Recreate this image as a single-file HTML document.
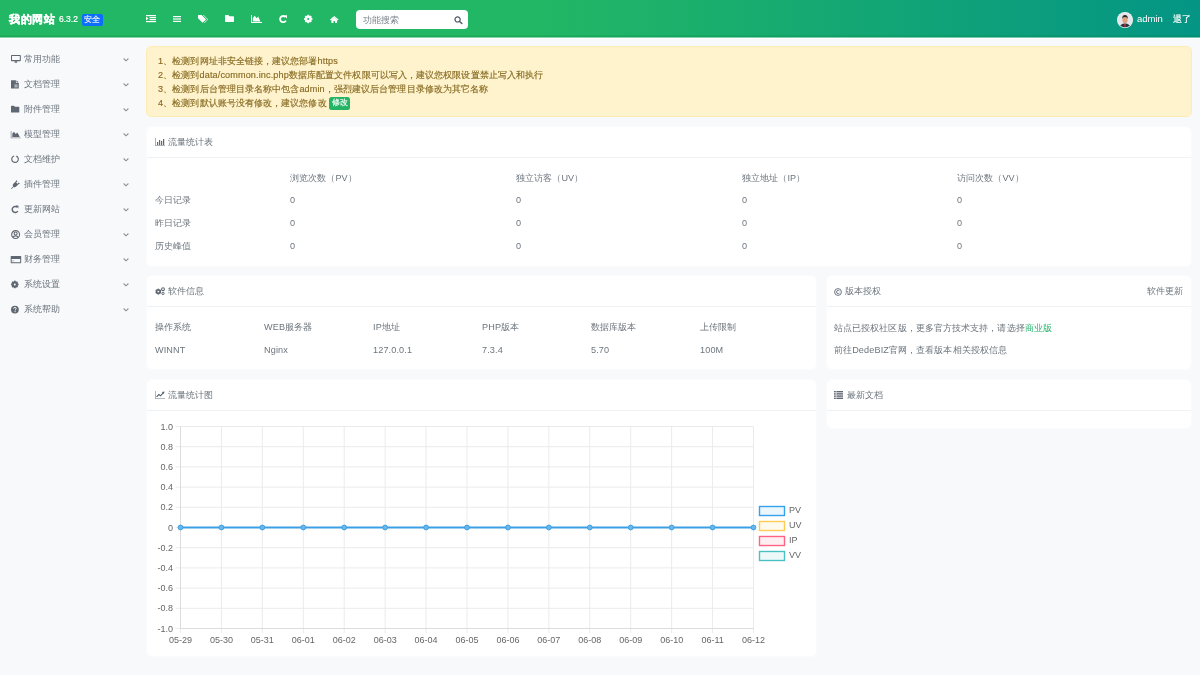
<!DOCTYPE html><html><head><meta charset="utf-8"><style>
*{box-sizing:border-box;margin:0;padding:0}
html,body{width:1200px;height:675px;overflow:hidden}
body{background:#f8f9fb;font-family:"Liberation Sans",sans-serif;color:#6c757d;position:relative}
.a{position:absolute;white-space:nowrap;line-height:1}
#hdr{position:absolute;left:0;top:0;width:1200px;height:37px;background:linear-gradient(90deg,#22b765 0%,#22b765 45%,#049585 100%)}
#hdrb{position:absolute;left:0;top:35px;width:1200px;height:2px;background:linear-gradient(rgba(0,120,40,0.1),rgba(0,120,40,0.25))}
#hdrs{position:absolute;left:0;top:37px;width:1200px;height:1px;background:linear-gradient(90deg,#22b765 0%,#22b765 45%,#049585 100%);opacity:.55}
#hdrw{position:absolute;left:0;top:38px;width:1200px;height:1px;background:#fff}
.card{position:absolute;background:#fff;border:1px solid #fafbfc;border-radius:6px}
.hl{position:absolute;height:1px;background:#f0f2f4}
.sb{font-size:9.1px;color:#6c757d;letter-spacing:.08px}
svg{position:absolute;overflow:visible}
.t9{font-size:9.1px;color:#6c757d;letter-spacing:.08px}
.en{letter-spacing:.13px}
</style></head><body>
<div id="root" style="position:absolute;left:0;top:0;width:1200px;height:675px;will-change:transform">
<div id="hdr"></div><div id="hdrs"></div><div id="hdrb"></div><div id="hdrw"></div>
<div class="a" style="left:9px;top:14.2px;font-size:11.4px;letter-spacing:.5px;font-weight:bold;color:#fff;-webkit-text-stroke:0.3px #fff">我的网站</div>
<div class="a" style="left:59px;top:15px;font-size:8.5px;color:#fff;-webkit-text-stroke:0.2px #fff">6.3.2</div>
<div class="a" style="left:82px;top:14px;width:21px;height:12px;background:#0d6efd;border-radius:2px"></div>
<div class="a" style="left:84px;top:16px;font-size:8px;color:#fff;-webkit-text-stroke:0.15px #fff">安全</div>
<svg style="left:146px;top:15px" width="10" height="7" viewBox="0 0 10 7" fill="#fff"><rect x="0" y="0" width="10" height="1.2"/><rect x="3.5" y="2" width="6.5" height="1.2"/><rect x="3.5" y="4" width="6.5" height="1.2"/><rect x="0" y="6" width="10" height="1.2"/><path d="M0 1.8 L2.5 3.6 L0 5.4Z"/></svg>
<svg style="left:173px;top:16px" width="8" height="6" viewBox="0 0 8 6" fill="#fff"><rect x="0" y="0" width="8" height="1.2"/><rect x="0" y="2.4" width="8" height="1.2"/><rect x="0" y="4.8" width="8" height="1.2"/></svg>
<svg style="left:198px;top:15px" width="10" height="8" viewBox="0 0 10 8" fill="#fff"><path d="M0 0.6 L0 3.2 L4.6 7.8 L8 4.4 L3.6 0 L0.6 0Z M1.6 1.2a0.7 0.7 0 1 0 0.01 0Z"/><path d="M5 0 L9.4 4.4 L6 7.8 L6.6 8 L10 4.4 L5.8 0Z"/></svg>
<svg style="left:225px;top:15px" width="9" height="7" viewBox="0 0 9 7" fill="#fff"><path d="M0 0.8 Q0 0 0.8 0 L3.4 0 L4.4 1.2 L8.2 1.2 Q9 1.2 9 2 L9 6.2 Q9 7 8.2 7 L0.8 7 Q0 7 0 6.2Z"/></svg>
<svg style="left:251px;top:15px" width="11" height="8" viewBox="0 0 11 8" fill="#fff"><path d="M0 0 L0.9 0 L0.9 7 L11 7 L11 8 L0 8Z"/><path d="M1.8 6.4 L1.8 3 L3.8 0.8 L5.6 3.2 L7.2 1.4 L9.4 6.4Z"/></svg>
<svg style="left:279px;top:15px" width="8" height="8" viewBox="0 0 8 8" fill="#fff"><path d="M6.3 1.8 A3.1 3.1 0 1 0 6.9 5.6" fill="none" stroke="#fff" stroke-width="1.8"/><path d="M4.8 0.6 L8 0.2 L7.9 3.6Z"/></svg>
<svg style="left:304px;top:15px" width="8.5" height="8" viewBox="0 0 8.5 8" fill="#fff"><g transform="translate(4.25 4)"><circle r="2.5" fill="none" stroke="#fff" stroke-width="1.9"/><rect x="-0.85" y="-4.2" width="1.7" height="8.4"/><rect x="-0.85" y="-4.2" width="1.7" height="8.4" transform="rotate(45)"/><rect x="-0.85" y="-4.2" width="1.7" height="8.4" transform="rotate(90)"/><rect x="-0.85" y="-4.2" width="1.7" height="8.4" transform="rotate(135)"/><circle r="1.05" fill="#22b765"/></g></svg>
<svg style="left:330px;top:15.5px" width="8.5" height="7" viewBox="0 0 8.5 7" fill="#fff"><path d="M4.25 0 L8.5 3.6 L7.6 4.4 L4.25 1.6 L0.9 4.4 L0 3.6Z"/><path d="M1.4 3.9 L4.25 1.6 L7.1 3.9 L7.1 7 L5 7 L5 5 L3.5 5 L3.5 7 L1.4 7Z"/></svg>
<div class="a" style="left:356px;top:10px;width:112px;height:19px;background:#fff;border-radius:4px"></div>
<div class="a" style="left:363px;top:16.2px;font-size:8.75px;color:#7b848c">功能搜索</div>
<svg style="left:454px;top:15.8px" width="9" height="8" viewBox="0 0 9 8"><circle cx="3.6" cy="3.4" r="2.6" fill="none" stroke="#4f5a66" stroke-width="1.2"/><path d="M5.6 5.4 L7.9 7.6" stroke="#4f5a66" stroke-width="1.4" stroke-linecap="round"/></svg>
<svg style="left:1116.5px;top:12px" width="16" height="16" viewBox="0 0 16 16"><defs><clipPath id="cc"><circle cx="8" cy="8" r="7.3"/></clipPath></defs><circle cx="8" cy="8" r="8" fill="#f4f5f7"/><circle cx="8" cy="8" r="7.3" fill="#e3e6ea"/><g clip-path="url(#cc)"><path d="M2.5 16 Q3 11.8 8 11.6 Q13 11.8 13.5 16Z" fill="#2b3440"/><path d="M7.3 11.8 L8.7 11.8 L8.4 16 L7.6 16Z" fill="#d2322d"/><ellipse cx="8" cy="8" rx="2.6" ry="3.3" fill="#e0a080"/><path d="M5.2 7 Q5 3.2 8 3.1 Q11 3.2 10.8 7 Q10.4 5 8 4.9 Q5.6 5 5.2 7Z" fill="#2a2a2a"/></g></svg>
<div class="a" style="left:1137px;top:14px;font-size:9.5px;color:#fff">admin</div>
<div class="a" style="left:1173px;top:14.5px;font-size:9px;color:#fff;-webkit-text-stroke:0.2px #fff">退了</div>
<svg style="left:10.9px;top:54.5px" width="10" height="10" viewBox="0 0 10 10" fill="#5f6872"><path d="M0.7 0 L9.1 0 Q9.8 0 9.8 0.7 L9.8 5.6 Q9.8 6.3 9.1 6.3 L0.7 6.3 Q0 6.3 0 5.6 L0 0.7 Q0 0 0.7 0Z M1 0.95 L1 4.9 L8.8 4.9 L8.8 0.95Z" fill-rule="evenodd"/><path d="M3.7 6.3 L6.1 6.3 L6.2 7.7 L3.6 7.7Z"/></svg>
<div class="a sb" style="left:24px;top:54.5px">常用功能</div>
<svg style="left:123px;top:57.7px" width="6" height="4" viewBox="0 0 6 4"><path d="M0.6 0.5 L3 2.8 L5.4 0.5" fill="none" stroke="#8a929a" stroke-width="1.05"/></svg>
<svg style="left:10.9px;top:79.5px" width="10" height="10" viewBox="0 0 10 10" fill="#5f6872"><path d="M0 0.3 L4.9 0.3 L4.9 3.1 L7.8 3.1 L7.8 8.6 L0 8.6Z"/><path d="M5.5 0.3 L7.8 2.5 L5.5 2.5Z"/><rect x="3.4" y="4.3" width="3.2" height="3.2" fill="#a9afb5"/></svg>
<div class="a sb" style="left:24px;top:79.5px">文档管理</div>
<svg style="left:123px;top:82.7px" width="6" height="4" viewBox="0 0 6 4"><path d="M0.6 0.5 L3 2.8 L5.4 0.5" fill="none" stroke="#8a929a" stroke-width="1.05"/></svg>
<svg style="left:10.9px;top:104.5px" width="10" height="10" viewBox="0 0 10 10" fill="#5f6872"><path d="M0 1.3 Q0 0.7 0.6 0.7 L3 0.7 L3.9 1.7 L7.7 1.7 Q8.3 1.7 8.3 2.3 L8.3 7 Q8.3 7.6 7.7 7.6 L0.6 7.6 Q0 7.6 0 7Z"/></svg>
<div class="a sb" style="left:24px;top:104.5px">附件管理</div>
<svg style="left:123px;top:107.7px" width="6" height="4" viewBox="0 0 6 4"><path d="M0.6 0.5 L3 2.8 L5.4 0.5" fill="none" stroke="#8a929a" stroke-width="1.05"/></svg>
<svg style="left:10.9px;top:129.5px" width="10" height="10" viewBox="0 0 10 10" fill="#5f6872"><path d="M-0.3 0.9 L0.5 0.9 L0.5 7.4 L9.7 7.4 L9.7 8.2 L-0.3 8.2Z" fill="#8f979e"/><path d="M1.3 6.9 L1.3 3.6 L3 1.8 L4.7 3.9 L6.3 2.6 L7.4 4.2 L8.8 6.9Z"/></svg>
<div class="a sb" style="left:24px;top:129.5px">模型管理</div>
<svg style="left:123px;top:132.7px" width="6" height="4" viewBox="0 0 6 4"><path d="M0.6 0.5 L3 2.8 L5.4 0.5" fill="none" stroke="#8a929a" stroke-width="1.05"/></svg>
<svg style="left:10.9px;top:154.5px" width="10" height="10" viewBox="0 0 10 10" fill="#5f6872"><path d="M5.3 1.1 A3.3 3.3 0 1 1 3.2 0.95" fill="none" stroke="#5f6872" stroke-width="1.15"/></svg>
<div class="a sb" style="left:24px;top:154.5px">文档维护</div>
<svg style="left:123px;top:157.7px" width="6" height="4" viewBox="0 0 6 4"><path d="M0.6 0.5 L3 2.8 L5.4 0.5" fill="none" stroke="#8a929a" stroke-width="1.05"/></svg>
<svg style="left:10.9px;top:179.5px" width="10" height="10" viewBox="0 0 10 10" fill="#5f6872"><path d="M0 8.5 L2.1 6.4 Q1.2 5 2.4 3.8 L4.5 1.7 L7.3 4.5 L5.2 6.6 Q4 7.8 2.6 6.9 L0.6 8.9Z M5.5 0.2 L6.5 1.2 L5.4 2.3 L4.4 1.3Z M7.7 2.4 L8.8 3.4 L7.7 4.5 L6.7 3.5Z"/></svg>
<div class="a sb" style="left:24px;top:179.5px">插件管理</div>
<svg style="left:123px;top:182.7px" width="6" height="4" viewBox="0 0 6 4"><path d="M0.6 0.5 L3 2.8 L5.4 0.5" fill="none" stroke="#8a929a" stroke-width="1.05"/></svg>
<svg style="left:10.9px;top:204.5px" width="10" height="10" viewBox="0 0 10 10" fill="#5f6872"><path d="M6.2 2.1 A3.05 3.05 0 1 0 6.8 6.2" fill="none" stroke="#5f6872" stroke-width="1.45"/><path d="M4.6 0.5 L7.4 0.5 L7.4 3.5Z"/></svg>
<div class="a sb" style="left:24px;top:204.5px">更新网站</div>
<svg style="left:123px;top:207.7px" width="6" height="4" viewBox="0 0 6 4"><path d="M0.6 0.5 L3 2.8 L5.4 0.5" fill="none" stroke="#8a929a" stroke-width="1.05"/></svg>
<svg style="left:10.9px;top:229.5px" width="10" height="10" viewBox="0 0 10 10" fill="#5f6872"><circle cx="4.6" cy="4.55" r="3.95" fill="none" stroke="#5f6872" stroke-width="1.1"/><circle cx="4.6" cy="3.5" r="1.55" fill="none" stroke="#5f6872" stroke-width="1.1"/><path d="M1.9 7.4 Q2.6 5.9 4.6 5.9 Q6.6 5.9 7.3 7.4" fill="none" stroke="#5f6872" stroke-width="1.1"/></svg>
<div class="a sb" style="left:24px;top:229.5px">会员管理</div>
<svg style="left:123px;top:232.7px" width="6" height="4" viewBox="0 0 6 4"><path d="M0.6 0.5 L3 2.8 L5.4 0.5" fill="none" stroke="#8a929a" stroke-width="1.05"/></svg>
<svg style="left:10.9px;top:254.5px" width="10" height="10" viewBox="0 0 10 10" fill="#5f6872"><path d="M0.3 0.9 L9.6 0.9 Q10.2 0.9 10.2 1.5 L10.2 7.6 Q10.2 8.2 9.6 8.2 L0.3 8.2 Q-0.3 8.2 -0.3 7.6 L-0.3 1.5 Q-0.3 0.9 0.3 0.9Z M0.7 3.9 L0.7 7.2 L9.2 7.2 L9.2 3.9Z" fill-rule="evenodd"/><rect x="1.2" y="5.6" width="2" height="0.7" fill="#8f979e"/></svg>
<div class="a sb" style="left:24px;top:254.5px">财务管理</div>
<svg style="left:123px;top:257.7px" width="6" height="4" viewBox="0 0 6 4"><path d="M0.6 0.5 L3 2.8 L5.4 0.5" fill="none" stroke="#8a929a" stroke-width="1.05"/></svg>
<svg style="left:10.9px;top:279.5px" width="10" height="10" viewBox="0 0 10 10" fill="#5f6872"><g transform="translate(3.8 4.45)"><circle r="2.35" fill="none" stroke="#5f6872" stroke-width="1.8"/><rect x="-0.8" y="-3.8" width="1.6" height="7.6"/><rect x="-0.8" y="-3.8" width="1.6" height="7.6" transform="rotate(45)"/><rect x="-0.8" y="-3.8" width="1.6" height="7.6" transform="rotate(90)"/><rect x="-0.8" y="-3.8" width="1.6" height="7.6" transform="rotate(135)"/><circle r="1" fill="#f8f9fb"/></g></svg>
<div class="a sb" style="left:24px;top:279.5px">系统设置</div>
<svg style="left:123px;top:282.7px" width="6" height="4" viewBox="0 0 6 4"><path d="M0.6 0.5 L3 2.8 L5.4 0.5" fill="none" stroke="#8a929a" stroke-width="1.05"/></svg>
<svg style="left:10.9px;top:304.5px" width="10" height="10" viewBox="0 0 10 10" fill="#5f6872"><circle cx="3.9" cy="4.6" r="3.9"/><path d="M2.65 3.7 Q2.65 2.4 3.9 2.4 Q5.15 2.4 5.15 3.5 Q5.15 4.2 4.4 4.6 Q4.1 4.8 4.1 5.5" fill="none" stroke="#f8f9fb" stroke-width="1"/><circle cx="4.1" cy="6.6" r="0.6" fill="#f8f9fb"/></svg>
<div class="a sb" style="left:24px;top:304.5px">系统帮助</div>
<svg style="left:123px;top:307.7px" width="6" height="4" viewBox="0 0 6 4"><path d="M0.6 0.5 L3 2.8 L5.4 0.5" fill="none" stroke="#8a929a" stroke-width="1.05"/></svg>
<div class="a" style="left:146px;top:46px;width:1046px;height:71px;background:#fff3cd;border:1px solid #ffecb5;border-radius:5px"></div>
<div class="a" style="left:158px;top:56.5px;font-size:9.1px;letter-spacing:.08px;color:#876b22;-webkit-text-stroke:0.15px #876b22"><span class="en">1</span>、检测到网址非安全链接，建议您部署<span class="en">https</span></div>
<div class="a" style="left:158px;top:70.5px;font-size:9.1px;letter-spacing:.08px;color:#876b22;-webkit-text-stroke:0.15px #876b22"><span class="en">2</span>、检测到<span class="en">data/common.inc.php</span>数据库配置文件权限可以写入，建议您权限设置禁止写入和执行</div>
<div class="a" style="left:158px;top:84.5px;font-size:9.1px;letter-spacing:.08px;color:#876b22;-webkit-text-stroke:0.15px #876b22"><span class="en">3</span>、检测到后台管理目录名称中包含<span class="en">admin</span>，强烈建议后台管理目录修改为其它名称</div>
<div class="a" style="left:158px;top:98.5px;font-size:9.1px;letter-spacing:.08px;color:#876b22;-webkit-text-stroke:0.15px #876b22"><span class="en">4</span>、检测到默认账号没有修改，建议您修改</div>
<div class="a" style="left:329px;top:97px;width:21px;height:12.5px;background:#25b466;border-radius:2.5px"></div>
<div class="a" style="left:331.5px;top:99.3px;font-size:8.2px;color:#fff;-webkit-text-stroke:0.15px #fff">修改</div>
<div class="card" style="left:146px;top:126px;width:1046px;height:141px"></div>
<div class="hl" style="left:147px;top:157px;width:1044px"></div>
<svg style="left:155px;top:137.8px" width="10" height="8" viewBox="0 0 10 8" fill="#5f6872"><rect x="0" y="0" width="0.8" height="8" fill="#98a0a6"/><rect x="0" y="7.2" width="10" height="0.8" fill="#98a0a6"/><rect x="2" y="4" width="1.2" height="3"/><rect x="4" y="2" width="1.2" height="5"/><rect x="6" y="3" width="1.2" height="4"/><rect x="8" y="1" width="1.2" height="6"/></svg>
<div class="a t9" style="left:168px;top:137.7px">流量统计表</div>
<div class="a t9" style="left:290px;top:173.5px">浏览次数（PV）</div>
<div class="a t9" style="left:516px;top:173.5px">独立访客（UV）</div>
<div class="a t9" style="left:742px;top:173.5px">独立地址（IP）</div>
<div class="a t9" style="left:957px;top:173.5px">访问次数（VV）</div>
<div class="a t9" style="left:155px;top:196px">今日记录</div>
<div class="a t9" style="left:290px;top:196px">0</div>
<div class="a t9" style="left:516px;top:196px">0</div>
<div class="a t9" style="left:742px;top:196px">0</div>
<div class="a t9" style="left:957px;top:196px">0</div>
<div class="a t9" style="left:155px;top:219px">昨日记录</div>
<div class="a t9" style="left:290px;top:219px">0</div>
<div class="a t9" style="left:516px;top:219px">0</div>
<div class="a t9" style="left:742px;top:219px">0</div>
<div class="a t9" style="left:957px;top:219px">0</div>
<div class="a t9" style="left:155px;top:242px">历史峰值</div>
<div class="a t9" style="left:290px;top:242px">0</div>
<div class="a t9" style="left:516px;top:242px">0</div>
<div class="a t9" style="left:742px;top:242px">0</div>
<div class="a t9" style="left:957px;top:242px">0</div>
<div class="card" style="left:146px;top:275px;width:671px;height:95px"></div>
<div class="hl" style="left:147px;top:306px;width:669px"></div>
<svg style="left:155px;top:287px" width="10" height="8" viewBox="0 0 10 8" fill="#5f6872"><g transform="translate(3.3 4.6)"><circle r="2" fill="none" stroke="#5f6872" stroke-width="1.4"/><rect x="-0.6" y="-3" width="1.2" height="6"/><rect x="-0.6" y="-3" width="1.2" height="6" transform="rotate(60)"/><rect x="-0.6" y="-3" width="1.2" height="6" transform="rotate(120)"/><circle r="0.8" fill="#fff"/></g><circle cx="8" cy="2.2" r="1.4" fill="none" stroke="#5f6872" stroke-width="1.1"/><circle cx="8" cy="6.4" r="1.2" fill="none" stroke="#5f6872" stroke-width="1"/></svg>
<div class="a t9" style="left:168px;top:287.2px">软件信息</div>
<div class="a t9" style="left:155px;top:322.5px">操作系统</div>
<div class="a t9" style="left:155px;top:346px"><span class="en">WINNT</span></div>
<div class="a t9" style="left:264px;top:322.5px"><span class="en">WEB</span>服务器</div>
<div class="a t9" style="left:264px;top:346px"><span class="en">Nginx</span></div>
<div class="a t9" style="left:373px;top:322.5px"><span class="en">IP</span>地址</div>
<div class="a t9" style="left:373px;top:346px"><span class="en">127.0.0.1</span></div>
<div class="a t9" style="left:482px;top:322.5px"><span class="en">PHP</span>版本</div>
<div class="a t9" style="left:482px;top:346px"><span class="en">7.3.4</span></div>
<div class="a t9" style="left:591px;top:322.5px">数据库版本</div>
<div class="a t9" style="left:591px;top:346px"><span class="en">5.70</span></div>
<div class="a t9" style="left:700px;top:322.5px">上传限制</div>
<div class="a t9" style="left:700px;top:346px"><span class="en">100M</span></div>
<div class="card" style="left:826px;top:275px;width:366px;height:95px"></div>
<div class="hl" style="left:827px;top:306px;width:364px"></div>
<svg style="left:834px;top:287.5px" width="8" height="8" viewBox="0 0 8 8"><circle cx="4" cy="4" r="3.4" fill="none" stroke="#5f6872" stroke-width="0.9"/><path d="M5.4 3 A1.6 1.6 0 1 0 5.4 5" fill="none" stroke="#5f6872" stroke-width="0.9"/></svg>
<div class="a t9" style="left:845px;top:287.2px">版本授权</div>
<div class="a t9" style="left:1147px;top:287.2px">软件更新</div>
<div class="a t9" style="left:834px;top:323.5px">站点已授权社区版，更多官方技术支持，请选择<span style="color:#25b469">商业版</span></div>
<div class="a t9" style="left:834px;top:345.5px">前往<span class="en">DedeBIZ</span>官网，查看版本相关授权信息</div>
<div class="card" style="left:826px;top:379px;width:366px;height:50px"></div>
<div class="hl" style="left:827px;top:410px;width:364px"></div>
<svg style="left:834px;top:390.5px" width="9" height="8" viewBox="0 0 9 8" fill="#5f6872"><rect x="0" y="0" width="1.8" height="1.4"/><rect x="2.4" y="0" width="6.6" height="1.4"/><rect x="0" y="2.2" width="1.8" height="1.4"/><rect x="2.4" y="2.2" width="6.6" height="1.4"/><rect x="0" y="4.4" width="1.8" height="1.4"/><rect x="2.4" y="4.4" width="6.6" height="1.4"/><rect x="0" y="6.6" width="1.8" height="1.4"/><rect x="2.4" y="6.6" width="6.6" height="1.4"/></svg>
<div class="a t9" style="left:847px;top:390.7px">最新文档</div>
<div class="card" style="left:146px;top:379px;width:671px;height:278px"></div>
<div class="hl" style="left:147px;top:410px;width:669px"></div>
<svg style="left:155px;top:391px" width="10" height="8" viewBox="0 0 10 8" fill="#4f5963"><rect x="0" y="0" width="0.8" height="8" fill="#a0a7ad"/><rect x="0" y="7.2" width="10" height="0.8" fill="#a0a7ad"/><path d="M1.6 5.8 L3.9 3.4 L5.5 4.8 L8.3 1.8" fill="none" stroke="#4f5963" stroke-width="1.1"/><path d="M6.9 1.1 L9.4 0.5 L8.9 3Z"/></svg>
<div class="a t9" style="left:168px;top:390.7px">流量统计图</div>
<svg style="left:0;top:0" width="1200" height="675" viewBox="0 0 1200 675"><line x1="175.5" y1="426.5" x2="753.5" y2="426.5" stroke="#ebebeb" stroke-width="1"/><line x1="175.5" y1="446.7" x2="753.5" y2="446.7" stroke="#ebebeb" stroke-width="1"/><line x1="175.5" y1="466.9" x2="753.5" y2="466.9" stroke="#ebebeb" stroke-width="1"/><line x1="175.5" y1="487.1" x2="753.5" y2="487.1" stroke="#ebebeb" stroke-width="1"/><line x1="175.5" y1="507.3" x2="753.5" y2="507.3" stroke="#ebebeb" stroke-width="1"/><line x1="175.5" y1="527.5" x2="753.5" y2="527.5" stroke="#ebebeb" stroke-width="1"/><line x1="175.5" y1="547.7" x2="753.5" y2="547.7" stroke="#ebebeb" stroke-width="1"/><line x1="175.5" y1="567.9" x2="753.5" y2="567.9" stroke="#ebebeb" stroke-width="1"/><line x1="175.5" y1="588.1" x2="753.5" y2="588.1" stroke="#ebebeb" stroke-width="1"/><line x1="175.5" y1="608.3" x2="753.5" y2="608.3" stroke="#ebebeb" stroke-width="1"/><line x1="175.5" y1="628.5" x2="753.5" y2="628.5" stroke="#ebebeb" stroke-width="1"/><line x1="180.5" y1="426.5" x2="180.5" y2="633" stroke="#ebebeb" stroke-width="1"/><line x1="221.42857142857144" y1="426.5" x2="221.42857142857144" y2="633" stroke="#ebebeb" stroke-width="1"/><line x1="262.3571428571429" y1="426.5" x2="262.3571428571429" y2="633" stroke="#ebebeb" stroke-width="1"/><line x1="303.2857142857143" y1="426.5" x2="303.2857142857143" y2="633" stroke="#ebebeb" stroke-width="1"/><line x1="344.2142857142857" y1="426.5" x2="344.2142857142857" y2="633" stroke="#ebebeb" stroke-width="1"/><line x1="385.1428571428571" y1="426.5" x2="385.1428571428571" y2="633" stroke="#ebebeb" stroke-width="1"/><line x1="426.07142857142856" y1="426.5" x2="426.07142857142856" y2="633" stroke="#ebebeb" stroke-width="1"/><line x1="467.0" y1="426.5" x2="467.0" y2="633" stroke="#ebebeb" stroke-width="1"/><line x1="507.92857142857144" y1="426.5" x2="507.92857142857144" y2="633" stroke="#ebebeb" stroke-width="1"/><line x1="548.8571428571429" y1="426.5" x2="548.8571428571429" y2="633" stroke="#ebebeb" stroke-width="1"/><line x1="589.7857142857142" y1="426.5" x2="589.7857142857142" y2="633" stroke="#ebebeb" stroke-width="1"/><line x1="630.7142857142858" y1="426.5" x2="630.7142857142858" y2="633" stroke="#ebebeb" stroke-width="1"/><line x1="671.6428571428571" y1="426.5" x2="671.6428571428571" y2="633" stroke="#ebebeb" stroke-width="1"/><line x1="712.5714285714286" y1="426.5" x2="712.5714285714286" y2="633" stroke="#ebebeb" stroke-width="1"/><line x1="753.5" y1="426.5" x2="753.5" y2="633" stroke="#ebebeb" stroke-width="1"/><line x1="180.5" y1="426.5" x2="180.5" y2="628.5" stroke="#dcdcdc" stroke-width="1"/><line x1="180.5" y1="628.5" x2="753.5" y2="628.5" stroke="#dcdcdc" stroke-width="1"/><text x="173" y="429.5" text-anchor="end" font-size="9" fill="#666" font-family="Liberation Sans">1.0</text><text x="173" y="449.7" text-anchor="end" font-size="9" fill="#666" font-family="Liberation Sans">0.8</text><text x="173" y="469.9" text-anchor="end" font-size="9" fill="#666" font-family="Liberation Sans">0.6</text><text x="173" y="490.1" text-anchor="end" font-size="9" fill="#666" font-family="Liberation Sans">0.4</text><text x="173" y="510.3" text-anchor="end" font-size="9" fill="#666" font-family="Liberation Sans">0.2</text><text x="173" y="530.5" text-anchor="end" font-size="9" fill="#666" font-family="Liberation Sans">0</text><text x="173" y="550.7" text-anchor="end" font-size="9" fill="#666" font-family="Liberation Sans">-0.2</text><text x="173" y="570.9" text-anchor="end" font-size="9" fill="#666" font-family="Liberation Sans">-0.4</text><text x="173" y="591.1" text-anchor="end" font-size="9" fill="#666" font-family="Liberation Sans">-0.6</text><text x="173" y="611.3" text-anchor="end" font-size="9" fill="#666" font-family="Liberation Sans">-0.8</text><text x="173" y="631.5" text-anchor="end" font-size="9" fill="#666" font-family="Liberation Sans">-1.0</text><text x="180.5" y="643" text-anchor="middle" font-size="9" fill="#666" font-family="Liberation Sans">05-29</text><text x="221.42857142857144" y="643" text-anchor="middle" font-size="9" fill="#666" font-family="Liberation Sans">05-30</text><text x="262.3571428571429" y="643" text-anchor="middle" font-size="9" fill="#666" font-family="Liberation Sans">05-31</text><text x="303.2857142857143" y="643" text-anchor="middle" font-size="9" fill="#666" font-family="Liberation Sans">06-01</text><text x="344.2142857142857" y="643" text-anchor="middle" font-size="9" fill="#666" font-family="Liberation Sans">06-02</text><text x="385.1428571428571" y="643" text-anchor="middle" font-size="9" fill="#666" font-family="Liberation Sans">06-03</text><text x="426.07142857142856" y="643" text-anchor="middle" font-size="9" fill="#666" font-family="Liberation Sans">06-04</text><text x="467.0" y="643" text-anchor="middle" font-size="9" fill="#666" font-family="Liberation Sans">06-05</text><text x="507.92857142857144" y="643" text-anchor="middle" font-size="9" fill="#666" font-family="Liberation Sans">06-06</text><text x="548.8571428571429" y="643" text-anchor="middle" font-size="9" fill="#666" font-family="Liberation Sans">06-07</text><text x="589.7857142857142" y="643" text-anchor="middle" font-size="9" fill="#666" font-family="Liberation Sans">06-08</text><text x="630.7142857142858" y="643" text-anchor="middle" font-size="9" fill="#666" font-family="Liberation Sans">06-09</text><text x="671.6428571428571" y="643" text-anchor="middle" font-size="9" fill="#666" font-family="Liberation Sans">06-10</text><text x="712.5714285714286" y="643" text-anchor="middle" font-size="9" fill="#666" font-family="Liberation Sans">06-11</text><text x="753.5" y="643" text-anchor="middle" font-size="9" fill="#666" font-family="Liberation Sans">06-12</text><line x1="180.5" y1="527.5" x2="753.5" y2="527.5" stroke="#3a9fe4" stroke-width="2.1"/><circle cx="180.5" cy="527.5" r="2.4" fill="#6bb6ea" stroke="#3a9fe4" stroke-width="1"/><circle cx="221.42857142857144" cy="527.5" r="2.4" fill="#6bb6ea" stroke="#3a9fe4" stroke-width="1"/><circle cx="262.3571428571429" cy="527.5" r="2.4" fill="#6bb6ea" stroke="#3a9fe4" stroke-width="1"/><circle cx="303.2857142857143" cy="527.5" r="2.4" fill="#6bb6ea" stroke="#3a9fe4" stroke-width="1"/><circle cx="344.2142857142857" cy="527.5" r="2.4" fill="#6bb6ea" stroke="#3a9fe4" stroke-width="1"/><circle cx="385.1428571428571" cy="527.5" r="2.4" fill="#6bb6ea" stroke="#3a9fe4" stroke-width="1"/><circle cx="426.07142857142856" cy="527.5" r="2.4" fill="#6bb6ea" stroke="#3a9fe4" stroke-width="1"/><circle cx="467.0" cy="527.5" r="2.4" fill="#6bb6ea" stroke="#3a9fe4" stroke-width="1"/><circle cx="507.92857142857144" cy="527.5" r="2.4" fill="#6bb6ea" stroke="#3a9fe4" stroke-width="1"/><circle cx="548.8571428571429" cy="527.5" r="2.4" fill="#6bb6ea" stroke="#3a9fe4" stroke-width="1"/><circle cx="589.7857142857142" cy="527.5" r="2.4" fill="#6bb6ea" stroke="#3a9fe4" stroke-width="1"/><circle cx="630.7142857142858" cy="527.5" r="2.4" fill="#6bb6ea" stroke="#3a9fe4" stroke-width="1"/><circle cx="671.6428571428571" cy="527.5" r="2.4" fill="#6bb6ea" stroke="#3a9fe4" stroke-width="1"/><circle cx="712.5714285714286" cy="527.5" r="2.4" fill="#6bb6ea" stroke="#3a9fe4" stroke-width="1"/><circle cx="753.5" cy="527.5" r="2.4" fill="#6bb6ea" stroke="#3a9fe4" stroke-width="1"/><rect x="759.5" y="506.5" width="25" height="9" fill="rgba(54,162,235,0.1)" stroke="#36a2eb" stroke-width="1.4"/><text x="789" y="513.3" font-size="9" fill="#666" font-family="Liberation Sans">PV</text><rect x="759.5" y="521.5" width="25" height="9" fill="rgba(255,205,86,0.1)" stroke="#ffcd56" stroke-width="1.4"/><text x="789" y="528.3" font-size="9" fill="#666" font-family="Liberation Sans">UV</text><rect x="759.5" y="536.5" width="25" height="9" fill="rgba(255,99,132,0.1)" stroke="#ff6384" stroke-width="1.4"/><text x="789" y="543.3" font-size="9" fill="#666" font-family="Liberation Sans">IP</text><rect x="759.5" y="551.5" width="25" height="9" fill="rgba(75,192,192,0.1)" stroke="#4bc0c0" stroke-width="1.4"/><text x="789" y="558.3" font-size="9" fill="#666" font-family="Liberation Sans">VV</text></svg>
</div></body></html>
